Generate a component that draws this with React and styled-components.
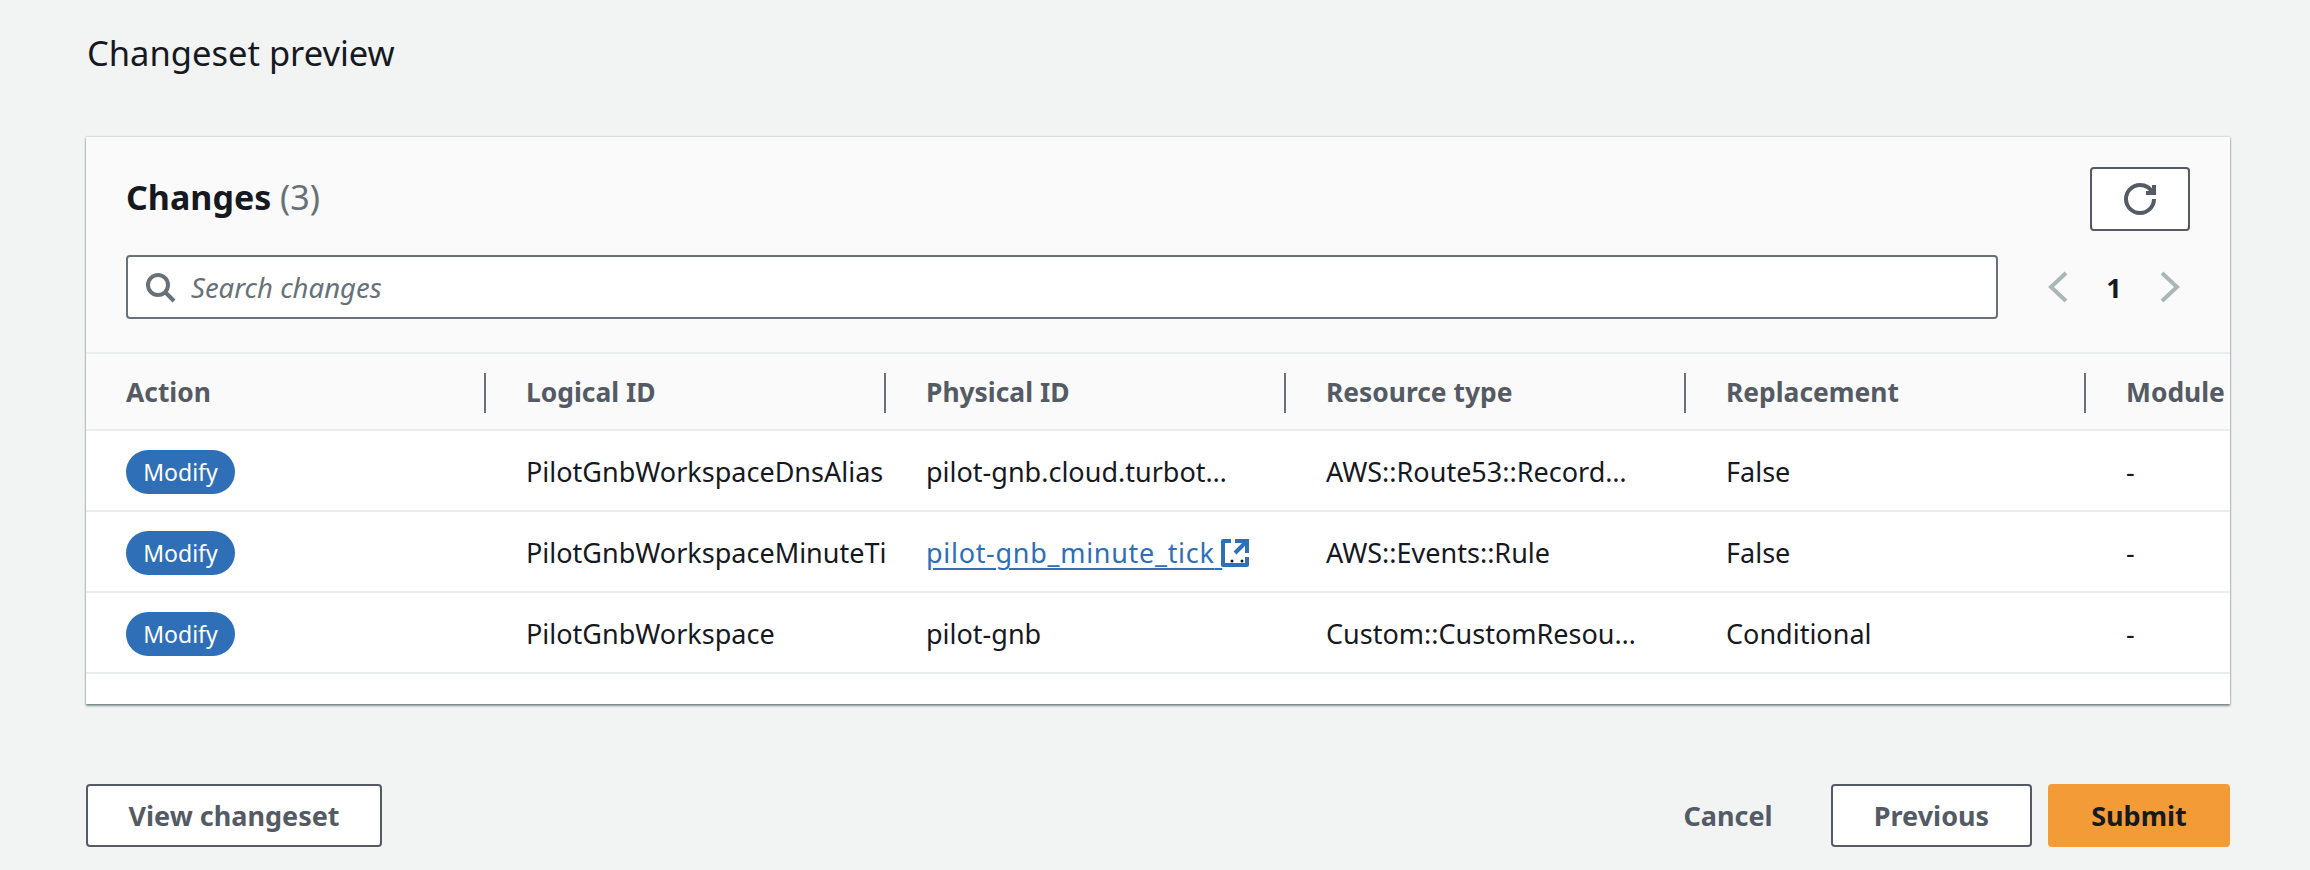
import React from "react";
import styled, { createGlobalStyle } from "styled-components";

const Global = createGlobalStyle`
  html, body { margin: 0; padding: 0; background: #f2f3f3; }
  body { font-family: "Noto Sans", "Open Sans", Arial, sans-serif; color: #16191f; overflow: hidden; }
`;

const Page = styled.div`
  width: 2310px;
  height: 870px;
  box-sizing: border-box;
  padding: 30px 80px 0 86px;
  display: flex;
  flex-direction: column;
  overflow: hidden;
`;
const Title = styled.h2`
  margin: 0 0 61px;
  padding-left: 1px;
  font-size: 34.5px;
  line-height: 46px;
  font-weight: 400;
`;
const Card = styled.section`
  background: #fff;
  height: 567px;
  box-shadow: 0 2px 2px rgba(0, 28, 36, 0.45), 0 0 2px rgba(0, 28, 36, 0.3);
  overflow: hidden;
  flex: none;
`;
const CardHeader = styled.header`
  background: #fafafa;
  padding: 30px 40px 0;
  box-sizing: border-box;
  height: 215px;
`;
const HeadingRow = styled.div`
  display: flex;
  justify-content: space-between;
  align-items: flex-start;
  height: 88px;
`;
const Heading = styled.h2`
  margin: -2px 0 0;
  font-size: 34px;
  line-height: 64px;
  font-weight: 700;
`;
const Count = styled.span`
  font-weight: 400;
  color: #687078;
`;
const IconButton = styled.button`
  width: 100px;
  height: 64px;
  box-sizing: border-box;
  display: flex;
  align-items: center;
  justify-content: center;
  background: #fff;
  border: 2px solid #545b64;
  border-radius: 4px;
  color: #545b64;
  padding: 0;
`;
const FilterRow = styled.div`
  display: flex;
  align-items: center;
`;
const Search = styled.div`
  width: 1872px;
  height: 64px;
  box-sizing: border-box;
  flex: none;
  display: flex;
  align-items: center;
  gap: 15px;
  padding-left: 16px;
  background: #fff;
  border: 2px solid #687078;
  border-radius: 4px;
  color: #687078;
`;
const Placeholder = styled.span`
  font-size: 27.5px;
  font-style: italic;
  color: #687078;
`;
const Pager = styled.div`
  display: flex;
  align-items: center;
  margin-left: 50px;
  color: #aab7b8;
`;
const PageNum = styled.span`
  font-size: 27px;
  font-weight: 700;
  color: #16191f;
  width: 92px;
  text-align: center;
`;
const TableHead = styled.div`
  display: grid;
  grid-template-columns: repeat(6, 400px);
  background: #fafafa;
  height: 75px;
  align-items: center;
  border-top: 2px solid #eaeded;
  border-bottom: 2px solid #eaeded;
`;
const HeadCell = styled.div`
  position: relative;
  padding-left: 40px;
  font-size: 26.4px;
  font-weight: 700;
  color: #545b64;
  white-space: nowrap;
  &:not(:last-child)::after {
    content: "";
    position: absolute;
    right: 0;
    top: -1px;
    height: 40px;
    width: 2px;
    background: #687078;
  }
`;
const Row = styled.div`
  display: grid;
  grid-template-columns: repeat(6, 400px);
  height: 77px;
  padding-top: 2px;
  align-items: center;
  border-bottom: 2px solid #eaeded;
`;
const Cell = styled.div`
  padding-left: 40px;
  padding-right: ${(p) => p.$pr || 0}px;
  font-size: 27px;
  white-space: nowrap;
  overflow: hidden;
  text-overflow: ${(p) => (p.$pr ? "ellipsis" : "clip")};
`;
const Badge = styled.span`
  display: inline-flex;
  align-items: center;
  justify-content: center;
  width: 109px;
  height: 44px;
  border-radius: 22px;
  background: #2e6fb7;
  color: #fff;
  font-size: 23px;
  vertical-align: middle;
`;
const LinkWrap = styled.span`
  display: inline-flex;
  align-items: center;
`;
const Link = styled.a`
  color: #2e6fb7;
  letter-spacing: 0.7px;
  text-decoration: underline;
  text-decoration-thickness: 2px;
  text-underline-offset: 5px;
  white-space: pre;
`;
const ExternalIcon = styled.svg`
  color: #2e6fb7;
  flex: none;
  margin-left: -3px;
`;
const Footer = styled.footer`
  margin-top: 80px;
  display: flex;
  align-items: center;
  justify-content: space-between;
`;
const Actions = styled.div`
  display: flex;
  align-items: center;
`;
const Button = styled.button`
  height: 63px;
  box-sizing: border-box;
  padding: 0;
  width: ${(p) => p.$w}px;
  margin-left: ${(p) => p.$ml || 0}px;
  font: 700 27px "Noto Sans", sans-serif;
  border-radius: 4px;
  color: ${(p) => (p.$variant === "primary" ? "#16191f" : "#545b64")};
  background: ${(p) => (p.$variant === "primary" ? "#f39c37" : p.$variant === "link" ? "transparent" : "#fff")};
  border: ${(p) => (p.$variant === "normal" ? "2px solid #545b64" : "0")};
`;

const Stroke = { fill: "none", stroke: "currentColor", strokeWidth: 2 };

const SearchIcon = () => (
  <svg width="32" height="32" viewBox="0 0 16 16" {...Stroke}>
    <circle cx="7" cy="7" r="5" />
    <path d="m15 15-4.5-4.5" />
  </svg>
);
const RefreshIcon = () => (
  <svg width="32" height="32" viewBox="0 0 16 16" {...Stroke}>
    <path d="M15 8c0 3.87-3.13 7-7 7s-7-3.13-7-7 3.13-7 7-7c2.79 0 5.2 1.63 6.33 4" />
    <path d="M15 1v4h-4" />
  </svg>
);
const Chevron = ({ dir }) => (
  <svg width="20" height="32" viewBox="0 0 20 32" fill="none" stroke="currentColor" strokeWidth="4">
    <path d={dir === "left" ? "M18 2 3 16l15 14" : "M2 2l15 14L2 30"} />
  </svg>
);
const External = () => (
  <ExternalIcon width="32" height="32" viewBox="0 0 16 16" {...Stroke}>
    <path d="M14 8.01v-6H8" />
    <path d="M14.02 2 8 8" />
    <path d="M6 2.01H2v12h12v-3.99" strokeLinejoin="round" />
    <circle cx="6.5" cy="12" r="0.75" fill="#16191f" stroke="none" />
    <circle cx="11.5" cy="12" r="0.75" fill="#16191f" stroke="none" />
  </ExternalIcon>
);

const columns = ["Action", "Logical ID", "Physical ID", "Resource type", "Replacement", "Module"];
const rows = [
  { id: "PilotGnbWorkspaceDnsAlias", phys: "pilot-gnb.cloud.turbot.com", type: "AWS::Route53::RecordSet", rep: "False" },
  { id: "PilotGnbWorkspaceMinuteTick", phys: "pilot-gnb_minute_tick", link: true, type: "AWS::Events::Rule", rep: "False" },
  { id: "PilotGnbWorkspace", phys: "pilot-gnb", type: "Custom::CustomResource", rep: "Conditional" },
];

export default function App() {
  return (
    <Page>
      <Global />
      <Title>Changeset preview</Title>
      <Card>
        <CardHeader>
          <HeadingRow>
            <Heading>
              Changes <Count>(3)</Count>
            </Heading>
            <IconButton aria-label="Refresh">
              <RefreshIcon />
            </IconButton>
          </HeadingRow>
          <FilterRow>
            <Search>
              <SearchIcon />
              <Placeholder>Search changes</Placeholder>
            </Search>
            <Pager>
              <Chevron dir="left" />
              <PageNum>1</PageNum>
              <Chevron dir="right" />
            </Pager>
          </FilterRow>
        </CardHeader>
        <TableHead>
          {columns.map((c) => (
            <HeadCell key={c}>{c}</HeadCell>
          ))}
        </TableHead>
        {rows.map((r) => (
          <Row key={r.id}>
            <Cell>
              <Badge>Modify</Badge>
            </Cell>
            <Cell>{r.id}</Cell>
            <Cell $pr={r.link ? 0 : 54}>
              {r.link ? (
                <LinkWrap>
                  <Link>{r.phys} </Link>
                  <External />
                </LinkWrap>
              ) : (
                r.phys
              )}
            </Cell>
            <Cell $pr={47}>{r.type}</Cell>
            <Cell>{r.rep}</Cell>
            <Cell>-</Cell>
          </Row>
        ))}
      </Card>
      <Footer>
        <Button $variant="normal" $w={296}>View changeset</Button>
        <Actions>
          <Button $variant="link" $w={148}>Cancel</Button>
          <Button $variant="normal" $w={201} $ml={29}>Previous</Button>
          <Button $variant="primary" $w={182} $ml={16}>Submit</Button>
        </Actions>
      </Footer>
    </Page>
  );
}
